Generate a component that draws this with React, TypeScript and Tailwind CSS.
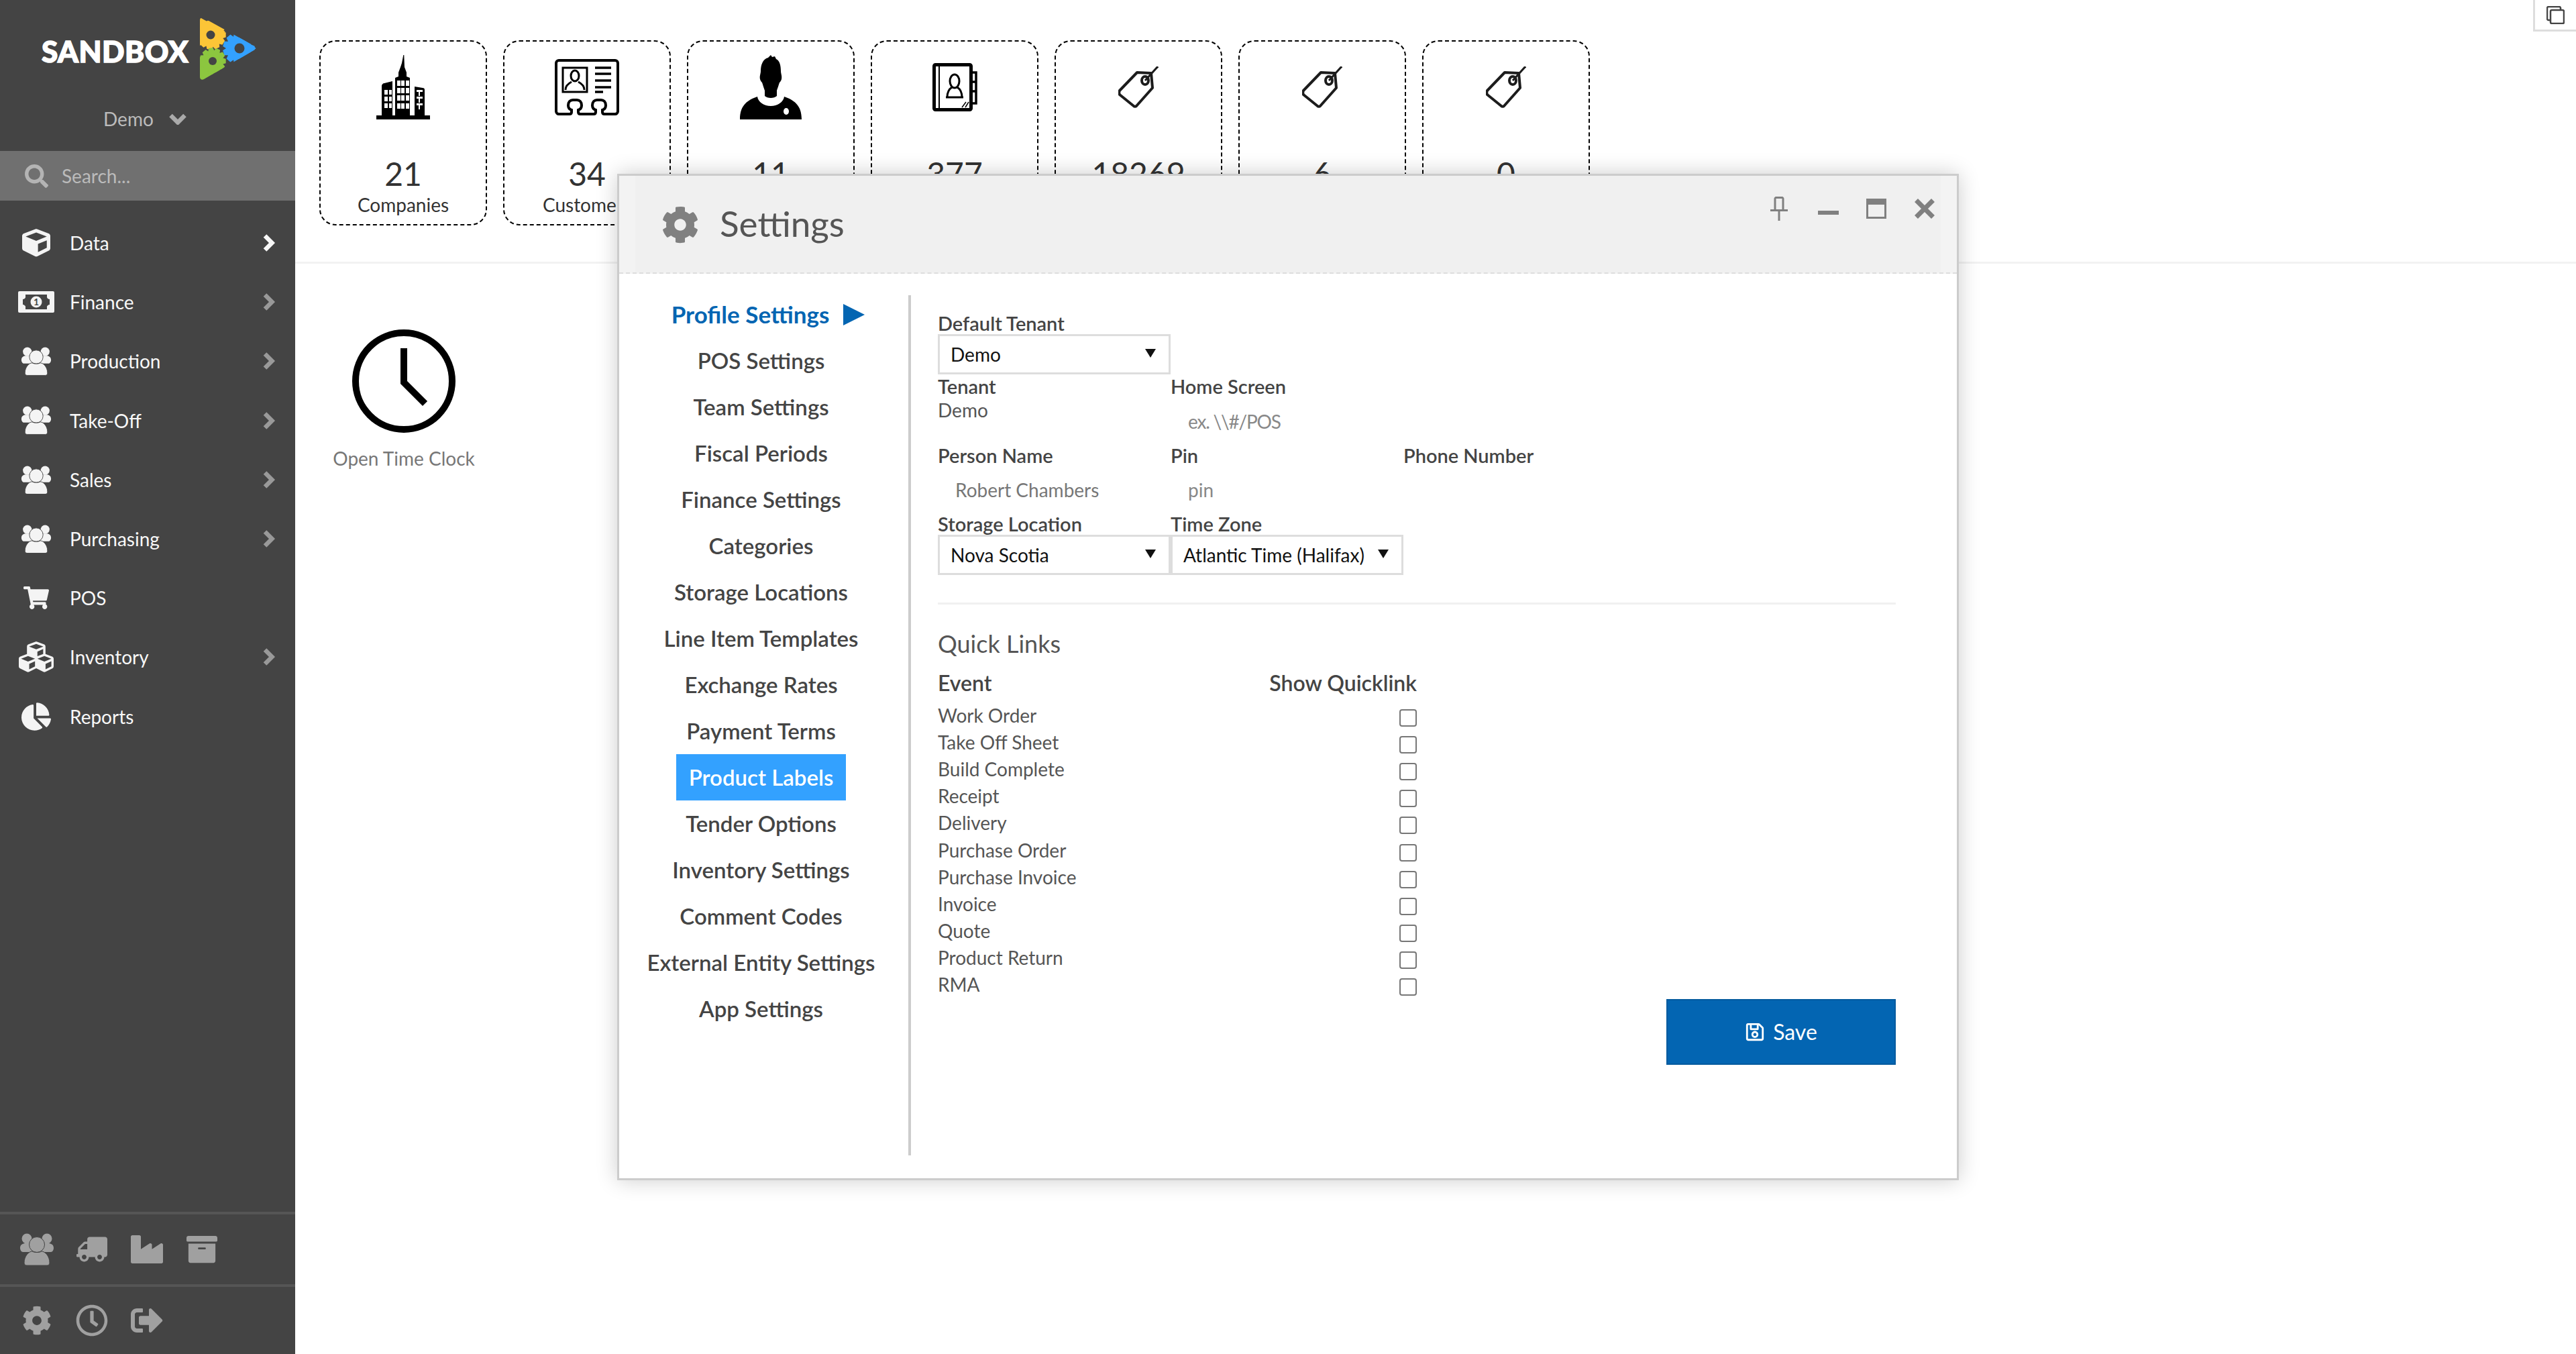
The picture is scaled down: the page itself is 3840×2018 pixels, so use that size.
import {
  FaArchive,
  FaChartPie,
  FaCog,
  FaCube,
  FaCubes,
  FaIndustry,
  FaRegClock,
  FaRegSave,
  FaSearch,
  FaShoppingCart,
  FaSignOutAlt,
  FaTruck,
} from 'react-icons/fa';

function gearPoints(cx: number, cy: number, r: number, R: number, n: number) {
  const pts: string[] = [];
  for (let i = 0; i < n; i++) {
    const a = (i / n) * Math.PI * 2;
    const step = (Math.PI * 2) / n;
    [[r, -0.5], [R, -0.28], [R, 0.28], [r, 0.5]].forEach(([rad, k]) => {
      const t = a + step * k;
      pts.push(`${(cx + rad * Math.cos(t)).toFixed(1)},${(cy + rad * Math.sin(t)).toFixed(1)}`);
    });
  }
  return pts.join(' ');
}

function Logo() {
  return (
    <svg width="84" height="96" viewBox="0 0 84 96">
      <defs>
        <clipPath id="playClip">
          <path d="M0 4c0-3 3-5 6-3l76 42c2 1 2 4 0 5L6 92c-3 2-6 0-6-3z" />
        </clipPath>
      </defs>
      <g clipPath="url(#playClip)">
        <polygon points="0,0 38,21 16,32 0,42" fill="#fcc537" />
        <polygon points={gearPoints(17, 26, 18, 22, 11)} fill="#fcc537" />
        <circle cx="16" cy="26" r="6.500" fill="#444" />
        <polygon points="84,46 58,28 58,64" fill="#33a1ff" />
        <polygon points={gearPoints(58, 46, 19, 24, 11)} fill="#33a1ff" />
        <circle cx="59" cy="46" r="7.500" fill="#444" />
        <polygon points="0,96 0,62 18,66 38,78" fill="#8cc63f" />
        <polygon points={gearPoints(19, 65, 16, 20, 11)} fill="#8cc63f" />
        <circle cx="19" cy="65" r="6" fill="#444" />
      </g>
    </svg>
  );
}

function ChevronRight({ color }: { color: string }) {
  return (
    <svg width="18" height="26" viewBox="0 0 18 26" fill="none" stroke={color} strokeWidth="6.500" strokeLinejoin="miter">
      <path d="M3 2.500L13.500 13 3 23.500" />
    </svg>
  );
}

function ChevronDown() {
  return (
    <svg width="26" height="17" viewBox="0 0 26 17" fill="none" stroke="#aaa" strokeWidth="6.500">
      <path d="M2.500 3L13 13.500 23.500 3" />
    </svg>
  );
}

function UsersIcon({ w, bg = '#444' }: { w: number; bg?: string }) {
  return (
    <svg width={w} viewBox="0 0 52 48" fill="currentColor">
      <circle cx="11" cy="8" r="7.500" />
      <circle cx="41" cy="8" r="7.500" />
      <path d="M1 22c0-5 4-7 8-7h6l6 13H5c-2 0-4-3-4-6zM51 22c0-5-4-7-8-7h-6l-6 13h16c2 0 4-3 4-6z" />
      <circle cx="26" cy="17" r="11.500" stroke={bg} strokeWidth="1" />
      <path d="M7 44c0-10 7-17 12-17 3 2 11 2 14 0 5 0 12 7 12 17 0 3-2 4-4 4H11c-2 0-4-1-4-4z" stroke={bg} strokeWidth="1" />
    </svg>
  );
}

function MoneyIcon() {
  return (
    <svg width="54" height="32" viewBox="0 0 54 32">
      <rect width="54" height="32" rx="2" fill="#f4f4f4" />
      <path d="M11 5h32v4c0 1 2 3 4 3v8c-2 0-4 2-4 3v4H11v-4c0-1-2-3-4-3v-8c2 0 4-2 4-3z" fill="#444" />
      <circle cx="27" cy="16" r="8.500" fill="#f4f4f4" />
      <text x="27" y="21" textAnchor="middle" fontSize="14" fontWeight="700" fill="#444" fontFamily="Lato, sans-serif">1</text>
    </svg>
  );
}

function BuildingIcon() {
  const cols = [31, 37, 44];
  const rows = [38, 49, 60, 72];
  return (
    <svg width="80" height="96" viewBox="0 0 80 96" fill="#000">
      <path d="M40.300 0h1l.7 18 3 8v6l5 2v56H28V34l5-2v-6l3-8 2-6z" />
      <path d="M8 46c0-2 2-4 4-4l12-3v51H8zM57 47l12 2c2 0 3 1 3 3v38H57z" />
      <rect y="90" width="80" height="6" />
      <g fill="#fff">
        {cols.map((x) => rows.map((y) => <rect key={`${x}-${y}`} x={x} y={y} width="5" height="8" />))}
        {[52, 62, 72].map((y) => (
          <g key={y}>
            <rect x="12" y={y} width="5" height="7" />
            <rect x="19" y={y} width="4" height="7" />
            <rect x="60" y={y} width="9" height="3" />
            <rect x="63" y={y} width="2" height="9" />
          </g>
        ))}
      </g>
    </svg>
  );
}

function IdCardIcon() {
  return (
    <svg width="96" height="84" viewBox="0 0 96 84" fill="none" stroke="#000" strokeWidth="4">
      <path d="M6 2h84c2 0 4 2 4 4v72c0 2-2 4-4 4H74c-2 0-3-1-3-3v-3c3-1 5-3 5-7 0-5-3-8-7-8h-6c-4 0-7 3-7 8 0 4 2 6 5 7v3c0 2-1 3-3 3H38c-2 0-3-1-3-3v-3c3-1 5-3 5-7 0-5-3-8-7-8h-6c-4 0-7 3-7 8 0 4 2 6 5 7v3c0 2-1 3-3 3H6c-2 0-4-2-4-4V6c0-2 2-4 4-4z" />
      <rect x="12" y="13" width="36" height="36" strokeWidth="3" />
      <ellipse cx="30" cy="25" rx="6" ry="8" strokeWidth="3" />
      <path d="M16 46c0-7 5-10 9-12M44 46c0-7-5-10-9-12" strokeWidth="3" />
      <path d="M60 13h24M60 22h24M60 32h24M60 42h24M60 49h12" strokeWidth="3.500" />
    </svg>
  );
}

function PersonIcon() {
  return (
    <svg width="92" height="96" viewBox="0 0 92 96" fill="#000">
      <path d="M46 0l2 3 4-1 2 4c5 2 7 9 7 18 0 4 2 7 1 12-1 3-2 4-3 5-2 6-3 9-4 12v8c-4 4-14 4-18 0v-8c-1-3-2-6-4-12-1-1-2-2-3-5-1-5 1-8 1-12 0-9 3-18 11-20z" />
      <path d="M26 62c1 8 10 14 20 14s19-6 20-14c14 5 26 12 26 34H0c0-22 12-29 26-34z" />
      <ellipse cx="69" cy="84" rx="4" ry="5" fill="#fff" />
    </svg>
  );
}

function ContactBookIcon() {
  return (
    <svg width="67" height="72" viewBox="0 0 67 72" fill="none" stroke="#000">
      <rect x="2.500" y="2.500" width="55" height="67" rx="2" strokeWidth="5" />
      <path d="M10 4v64" strokeWidth="2" />
      <path d="M60 14h5v46h-5M60 28h5M60 42h5" strokeWidth="3.500" />
      <ellipse cx="33" cy="27" rx="7" ry="10" strokeWidth="3" />
      <path d="M22 51c0-9 4-13 7-15M44 51c0-9-4-13-7-15M20 51h26" strokeWidth="3" />
      <path d="M44 66l6-8M49 66l5-8" strokeWidth="1.500" />
    </svg>
  );
}

function TagIcon() {
  return (
    <svg width="60" height="62" viewBox="0 0 60 62" fill="none" stroke="#1c1c1c" strokeWidth="4" strokeLinejoin="round">
      <path d="M28 9l21 1 2 22-24 27c-1 1-3 1-4 0L2 42c-1-2-1-4 0-6z" />
      <ellipse cx="40" cy="21" rx="5" ry="6" />
      <path d="M40 21L59 0" strokeWidth="3" />
    </svg>
  );
}

function PinIcon() {
  return (
    <svg width="26" height="36" viewBox="0 0 26 36" fill="none" stroke="#808080" strokeWidth="3">
      <path d="M7 20V3c0-1 1-1.500 1-1.500h10c0 0 1 .5 1 1.500v17" />
      <path d="M0 20.500h26" />
      <path d="M13 20v16" />
    </svg>
  );
}

function CloseIcon() {
  return (
    <svg width="30" height="30" viewBox="0 0 30 30" fill="none" stroke="#808080" strokeWidth="7">
      <path d="M2.500 2.500l25 25M27.500 2.500l-25 25" />
    </svg>
  );
}

function RestoreIcon() {
  return (
    <svg width="27" height="27" viewBox="0 0 27 27" fill="none" stroke="#444" strokeWidth="2.500">
      <path d="M5 21H3c-1 0-2-1-2-2V3c0-1 1-2 2-2h16c1 0 2 1 2 2v2" />
      <rect x="6" y="6" width="20" height="20" rx="2" />
    </svg>
  );
}

function ClockIcon() {
  return (
    <svg width="156" height="156" viewBox="0 0 156 156" fill="none" stroke="#000">
      <circle cx="78" cy="78" r="72" strokeWidth="10" />
      <path d="M78 34v46l28 28" strokeWidth="10" strokeLinecap="square" />
    </svg>
  );
}

const menu = [
  { label: 'Data', icon: <FaCube size={42} />, arrow: '#f8f8f8' },
  { label: 'Finance', icon: <MoneyIcon />, arrow: '#999' },
  { label: 'Production', icon: <UsersIcon w={46} />, arrow: '#999' },
  { label: 'Take-Off', icon: <UsersIcon w={46} />, arrow: '#999' },
  { label: 'Sales', icon: <UsersIcon w={46} />, arrow: '#999' },
  { label: 'Purchasing', icon: <UsersIcon w={46} />, arrow: '#999' },
  { label: 'POS', icon: <FaShoppingCart size={38} />, arrow: '' },
  { label: 'Inventory', icon: <FaCubes size={52} />, arrow: '#999' },
  { label: 'Reports', icon: <FaChartPie size={44} />, arrow: '' },
];

const cards = [
  { value: '21', label: 'Companies', icon: <BuildingIcon /> },
  { value: '34', label: 'Customers', icon: <IdCardIcon /> },
  { value: '11', label: 'Employees', icon: <PersonIcon /> },
  { value: '377', label: 'Contacts', icon: <ContactBookIcon /> },
  { value: '18269', label: 'Products', icon: <TagIcon /> },
  { value: '6', label: 'Services', icon: <TagIcon /> },
  { value: '0', label: 'Labour', icon: <TagIcon /> },
];

const settingsNav = [
  'POS Settings',
  'Team Settings',
  'Fiscal Periods',
  'Finance Settings',
  'Categories',
  'Storage Locations',
  'Line Item Templates',
  'Exchange Rates',
  'Payment Terms',
  'Product Labels',
  'Tender Options',
  'Inventory Settings',
  'Comment Codes',
  'External Entity Settings',
  'App Settings',
];

const events = [
  'Work Order',
  'Take Off Sheet',
  'Build Complete',
  'Receipt',
  'Delivery',
  'Purchase Order',
  'Purchase Invoice',
  'Invoice',
  'Quote',
  'Product Return',
  'RMA',
];

function Label({ children }: { children: string }) {
  return <div className="h-[32px] flex items-center text-[29px] font-semibold text-[#444]">{children}</div>;
}

function SelectBox({ value }: { value: string }) {
  return (
    <div className="w-[347px] pl-[16px] h-[60px] border-[3px] border-[#ddd] flex items-center justify-between text-[28px] text-[#111] pr-[19px]">
      <span>{value}</span>
      <span className="w-0 h-0 border-x-[8px] border-x-transparent border-t-[13px] border-t-[#111] -mt-[4px]" />
    </div>
  );
}

export default function App() {
  return (
    <div className="relative w-[3840px] h-[2018px] overflow-hidden flex bg-white font-['Lato',sans-serif]">
      {/* sidebar */}
      <aside className="w-[440px] h-full bg-[#444] flex flex-col shrink-0">
        <div className="h-[225px] relative">
          <div className="flex items-start pl-[62px] pt-[26px]">
            <span className="text-[44px] font-black text-white tracking-[0.5px] mt-[23px] leading-[54px] w-[236px] [-webkit-text-stroke:1.5px_white]">SANDBOX</span>
            <Logo />
          </div>
          <div className="flex items-center pl-[154px] mt-[35px] text-[28px] text-[#bbb] leading-[40px]">
            <span>Demo</span>
            <span className="ml-[23px]"><ChevronDown /></span>
          </div>
        </div>
        <div className="h-[74px] bg-[#707070] flex items-center pl-[37px] text-[28px] text-[#bbb]">
          <FaSearch size={35} className="text-[#b4b4b4]" />
          <span className="ml-[20px]">Search...</span>
        </div>
        <nav className="pt-[19px] flex flex-col">
          {menu.map((m) => (
            <div key={m.label} className="h-[88.2px] flex items-center pl-[14px] pr-[30px] text-[28px] text-[#f8f8f8]">
              <span className="w-[80px] flex justify-center text-[#f4f4f4]">{m.icon}</span>
              <span className="ml-[10px] flex-1">{m.label}</span>
              {m.arrow && <ChevronRight color={m.arrow} />}
            </div>
          ))}
        </nav>
        <div className="mt-auto text-[#a0a0a0]">
          <div className="h-[108px] border-t-[4px] border-[#555] flex items-center pl-[14px]">
            <span className="w-[82px] flex justify-center"><UsersIcon w={52} /></span>
            <span className="w-[82px] flex justify-center"><FaTruck size={46} className="-scale-x-100" /></span>
            <span className="w-[82px] flex justify-center"><FaIndustry size={48} /></span>
            <span className="w-[82px] flex justify-center"><FaArchive size={46} /></span>
          </div>
          <div className="h-[104px] border-t-[4px] border-[#555] flex items-center pl-[14px]">
            <span className="w-[82px] flex justify-center"><FaCog size={44} /></span>
            <span className="w-[82px] flex justify-center"><FaRegClock size={48} /></span>
            <span className="w-[82px] flex justify-center"><FaSignOutAlt size={48} /></span>
          </div>
        </div>
      </aside>

      {/* main */}
      <main className="flex-1 flex flex-col text-[#333]">
        <div className="h-[393px] border-b-[3px] border-[#f2f2f2] pl-[36px] pt-[60px] flex gap-[24px]">
          {cards.map((c) => (
            <div key={c.value + c.label} className="w-[250px] h-[276px] border-2 border-dashed border-black rounded-[24px] flex flex-col items-center">
              <div className="h-[136px] flex items-center justify-center">{c.icon}</div>
              <div className="mt-[31px] h-[60px] flex items-center text-[48px] leading-none">{c.value}</div>
              <div className="h-[32px] flex items-center text-[28px]">{c.label}</div>
            </div>
          ))}
        </div>
        <div className="pl-[37px] pt-[97px] w-[287px] flex flex-col items-center">
          <ClockIcon />
          <div className="mt-[17px] h-[40px] flex items-center text-[28px] text-[#777] whitespace-nowrap">Open Time Clock</div>
        </div>
      </main>

      {/* top right toggle */}
      <div className="absolute right-0 top-0 w-[64px] h-[47px] bg-white border-l-[3px] border-b-[3px] border-[#ddd] flex items-center justify-center">
        <RestoreIcon />
      </div>

      {/* settings window */}
      <div className="absolute left-[920px] top-[259px] w-[2000px] h-[1500px] bg-white border-[3px] border-[#ccc] shadow-[0_0_30px_rgba(0,0,0,0.2)] flex flex-col text-[#444]">
        <header className="h-[146px] bg-[#f3f3f3] border-b-2 border-dashed border-[#ddd] px-[24px] shrink-0">
          <div className="h-full bg-[#f0f0f0] flex items-start">
            <FaCog size={56} className="text-[#808080] ml-[39px] mt-[45px]" />
            <span className="ml-[31px] mt-[39px] text-[53px] leading-[64px] text-[#555]">Settings</span>
            <div className="ml-auto flex items-start text-[#808080] pr-[9px]">
              <span className="mt-[31px]"><PinIcon /></span>
              <span className="ml-[45px] mt-[52px] w-[31px] h-[6px] bg-[#808080]" />
              <span className="ml-[41px] mt-[34px] w-[30px] h-[30px] border-[3px] border-t-[9px] border-[#808080]" />
              <span className="ml-[42px] mt-[34px]"><CloseIcon /></span>
            </div>
          </div>
        </header>
        <div className="flex flex-1">
          <nav className="w-[431px] pr-[8px] pt-[26px] text-[33px] font-semibold shrink-0">
            <div className="h-[69px] flex items-center justify-center gap-[21px] ml-[21px] text-[#0365b2] text-[35px] font-bold">
              <span>Profile Settings</span>
              <span className="w-0 h-0 border-y-[16px] border-y-transparent border-l-[32px] border-l-[#0365b2]" />
            </div>
            {settingsNav.map((s) =>
              s === 'Product Labels' ? (
                <div key={s} className="h-[69px] w-[253px] mx-auto flex items-center justify-center bg-[#33a1ff] text-white">{s}</div>
              ) : (
                <div key={s} className="h-[69px] flex items-center justify-center whitespace-nowrap">{s}</div>
              )
            )}
          </nav>
          <section className="mt-[32px] mb-[34px] flex-1 border-l-4 border-[#ccc] pl-[40px] pt-[26px]">
            <Label>Default Tenant</Label>
            <SelectBox value="Demo" />
            <div className="grid grid-cols-[347px_347px_347px] mt-[2px]">
              <div>
                <Label>Tenant</Label>
                <div className="h-[38px] flex items-center text-[28px] text-[#555]">Demo</div>
              </div>
              <div>
                <Label>Home Screen</Label>
                <div className="h-[71px] flex items-center pl-[26px] text-[28px] text-[#888] tracking-[-1.2px]">ex. \\#/POS</div>
              </div>
            </div>
            <div className="grid grid-cols-[347px_347px_347px]">
              <div>
                <Label>Person Name</Label>
                <div className="h-[70px] flex items-center pl-[26px] text-[28px] text-[#777]">Robert Chambers</div>
              </div>
              <div>
                <Label>Pin</Label>
                <div className="h-[70px] flex items-center pl-[26px] text-[28px] text-[#888]">pin</div>
              </div>
              <Label>Phone Number</Label>
            </div>
            <div className="grid grid-cols-[347px_347px]">
              <div>
                <Label>Storage Location</Label>
                <SelectBox value="Nova Scotia" />
              </div>
              <div>
                <Label>Time Zone</Label>
                <SelectBox value="Atlantic Time (Halifax)" />
              </div>
            </div>
            <div className="mt-[41px] h-[3px] w-[1428px] bg-[#f0f0f0]" />
            <div className="mt-[33px] h-[50px] flex items-center text-[36px] text-[#555]">Quick Links</div>
            <div className="mt-[15px] w-[714px] h-[38px] flex items-center justify-between text-[32px] font-semibold">
              <span>Event</span>
              <span>Show Quicklink</span>
            </div>
            <div className="mt-[9px] w-[714px]">
              {events.map((e) => (
                <div key={e} className="h-[40.1px] flex items-center justify-between text-[28px] text-[#555]">
                  <span>{e}</span>
                  <span className="w-[26px] h-[26px] mt-[8px] border-2 border-[#777] rounded-[4px] bg-white" />
                </div>
              ))}
            </div>
            <div className="w-[1428px] flex justify-end mt-[2px]">
              <div className="w-[342px] h-[98px] bg-[#0365b2] border-2 border-[#035a9e] flex items-center justify-center text-white text-[32px] gap-[12px]">
                <FaRegSave size={30} />
                <span>Save</span>
              </div>
            </div>
          </section>
        </div>
      </div>
    </div>
  );
}
